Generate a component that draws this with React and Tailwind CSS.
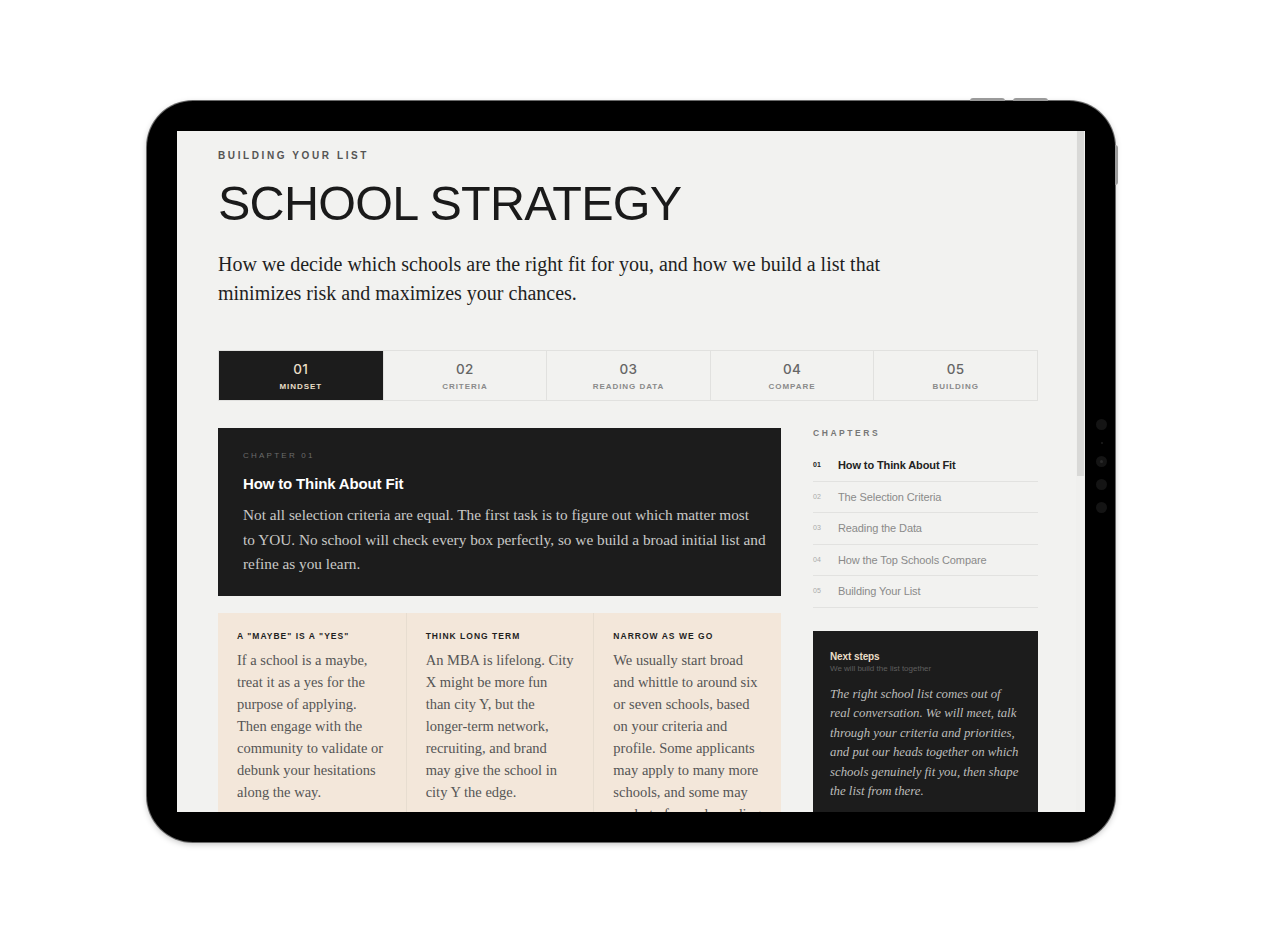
const tabs = [
  { num: "01", label: "MINDSET" },
  { num: "02", label: "CRITERIA" },
  { num: "03", label: "READING DATA" },
  { num: "04", label: "COMPARE" },
  { num: "05", label: "BUILDING" },
];

const chapters = [
  "How to Think About Fit",
  "The Selection Criteria",
  "Reading the Data",
  "How the Top Schools Compare",
  "Building Your List",
];

const principles = [
  {
    title: 'A "MAYBE" IS A "YES"',
    body: "If a school is a maybe, treat it as a yes for the purpose of applying. Then engage with the community to validate or debunk your hesitations along the way.",
  },
  {
    title: "THINK LONG TERM",
    body: "An MBA is lifelong. City X might be more fun than city Y, but the longer-term network, recruiting, and brand may give the school in city Y the edge.",
  },
  {
    title: "NARROW AS WE GO",
    body: "We usually start broad and whittle to around six or seven schools, based on your criteria and profile. Some applicants may apply to many more schools, and some may apply to fewer depending on their goals.",
  },
];

const sans = "font-['Liberation_Sans',Arial,sans-serif]";
const serif = "font-['Liberation_Serif','Times_New_Roman',serif]";

const App = () => {
  return (
    <div className={`w-[1266px] h-[949px] bg-white pt-[101px] pl-[147px] ${sans}`}>
      {/* Device */}
      <div className="relative w-[968px] h-[741px] rounded-[46px] bg-black p-[30px] ring-1 ring-[#6b6b6b] shadow-[0_2px_6px_rgba(0,0,0,0.25)]">
        {/* hardware buttons */}
        <div className="absolute -top-[3px] left-[823px] w-[35px] h-[3px] rounded-t bg-[#9a9a9a]" />
        <div className="absolute -top-[3px] left-[866px] w-[35px] h-[3px] rounded-t bg-[#9a9a9a]" />
        <div className="absolute top-[44px] -right-[3px] w-[3px] h-[40px] rounded-r bg-[#9a9a9a]" />
        {/* sensors on the right bezel */}
        <div className="absolute top-[318px] right-[8px] flex flex-col items-center gap-[12px]">
          <span className="w-[11px] h-[11px] rounded-full bg-[#141414]" />
          <span className="w-[2px] h-[2px] rounded-full bg-[#1e1e1e]" />
          <span className="w-[11px] h-[11px] rounded-full bg-[#141414] flex items-center justify-center">
            <span className="w-[3px] h-[3px] rounded-full bg-[#2a2a2a]" />
          </span>
          <span className="w-[11px] h-[11px] rounded-full bg-[#141414]" />
          <span className="w-[11px] h-[11px] rounded-full bg-[#141414]" />
        </div>

        {/* Screen */}
        <div className="relative w-[908px] h-[681px] overflow-hidden bg-[#f2f2f0]">
          {/* scrollbar */}
          <div className="absolute top-0 right-0 w-[9px] h-full bg-[#f0f0ee]" />
          <div className="absolute top-0 right-[1px] w-[7px] h-[345px] bg-[#d9d9d7]" />

          <div className="pl-[41px] pt-[19px] w-[861px]">
            <p className="text-[10px] leading-[12px] tracking-[0.26em] text-[#555] font-bold">
              BUILDING YOUR LIST
            </p>
            <h1 className="mt-[17px] text-[48.5px] leading-[48px] tracking-[-0.015em] text-[#1a1a1a]">
              SCHOOL STRATEGY
            </h1>
            <p className={`mt-[23px] w-[720px] text-[20px] leading-[29px] text-[#1f1f1f] ${serif}`}>
              How we decide which schools are the right fit for you, and how we build a list that minimizes risk and maximizes your chances.
            </p>

            {/* Tabs */}
            <div className="mt-[42px] w-[820px] grid grid-cols-5 border border-[#e1e1df]">
              {tabs.map((tab, index) => (
                <div
                  key={tab.num}
                  className={`h-[49px] flex flex-col items-center justify-center ${
                    index === 0
                      ? "bg-[#1c1c1c] text-[#e9dcc6]"
                      : "border-l border-[#e1e1df] text-[#666]"
                  }`}
                >
                  <span className="mt-[2px] font-['Inter',sans-serif] text-[13.5px] leading-[16px] font-medium tracking-[0.03em]">
                    {tab.num}
                  </span>
                  <span
                    className={`mt-[5px] text-[8px] leading-[10px] font-bold tracking-[0.12em] ${
                      index === 0 ? "text-[#e9dcc6]" : "text-[#8a8a8a]"
                    }`}
                  >
                    {tab.label}
                  </span>
                </div>
              ))}
            </div>

            {/* Main */}
            <div className="mt-[27px] flex gap-[32px]">
              <div className="w-[563px]">
                <div className="bg-[#1c1c1c] h-[168px] pl-[25px] pr-[12px] pt-[23px]">
                  <p className="text-[8px] leading-[10px] tracking-[0.28em] text-[#6b6b6b]">
                    CHAPTER 01
                  </p>
                  <h2 className="mt-[14px] text-[15px] leading-[18px] font-bold tracking-[-0.01em] text-white">
                    How to Think About Fit
                  </h2>
                  <p className={`mt-[10px] text-[15.3px] leading-[24.5px] text-[#c9c9c7] ${serif}`}>
                    Not all selection criteria are equal. The first task is to figure out which matter most
                    <br />
                    to YOU. No school will check every box perfectly, so we build a broad initial list and refine as you learn.
                  </p>
                </div>

                <div className="mt-[17px] grid grid-cols-3 bg-[#f3e7da] h-[240px]">
                  {principles.map((item, index) => (
                    <div
                      key={item.title}
                      className={`px-[19px] pt-[18px] ${index > 0 ? "border-l border-[#e7ddd0]" : ""}`}
                    >
                      <h3 className="text-[8.5px] leading-[10px] font-bold tracking-[0.12em] text-[#1f1f1f]">
                        {item.title}
                      </h3>
                      <p className={`mt-[8px] text-[14.5px] leading-[22px] text-[#555] ${serif}`}>
                        {item.body}
                      </p>
                    </div>
                  ))}
                </div>
              </div>

              {/* Sidebar */}
              <div className="w-[225px]">
                <p className="text-[8.5px] leading-[10px] font-bold tracking-[0.3em] text-[#777]">
                  CHAPTERS
                </p>
                <ul className="mt-[12px]">
                  {chapters.map((chapter, index) => (
                    <li
                      key={chapter}
                      className="h-[31.6px] flex items-center border-b border-[#e2e2e0]"
                    >
                      <span
                        className={`w-[25px] text-[7px] ${
                          index === 0 ? "text-[#222] font-bold" : "text-[#aaa]"
                        }`}
                      >
                        {String(index + 1).padStart(2, "0")}
                      </span>
                      <span
                        className={`text-[11px] tracking-[-0.01em] ${
                          index === 0 ? "text-[#222] font-bold" : "text-[#8a8a8a]"
                        }`}
                      >
                        {chapter}
                      </span>
                    </li>
                  ))}
                </ul>

                <div className="mt-[23px] bg-[#1c1c1c] h-[220px] pl-[17px] pr-[16px] pt-[20px]">
                  <p className="text-[10px] leading-[11px] font-bold tracking-[-0.01em] text-[#eadcc6]">
                    Next steps
                  </p>
                  <p className="mt-[2px] text-[8px] leading-[9px] text-[#5f5f5f]">
                    We will build the list together
                  </p>
                  <p className={`mt-[12px] text-[12.8px] leading-[19.5px] italic text-[#bdbdbb] ${serif}`}>
                    The right school list comes out of real conversation. We will meet, talk through your criteria and priorities, and put our heads together on which schools genuinely fit you, then shape the list from there.
                  </p>
                </div>
              </div>
            </div>
          </div>
        </div>
      </div>
    </div>
  );
};

export default App;
